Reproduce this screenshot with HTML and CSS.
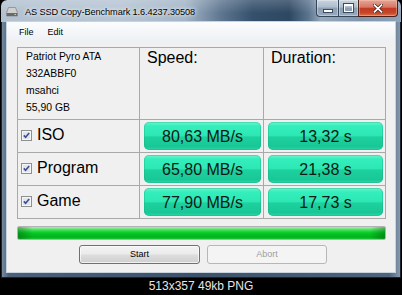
FILE: index.html
```html
<!DOCTYPE html>
<html>
<head>
<meta charset="utf-8">
<title>AS SSD Copy-Benchmark</title>
<link rel="stylesheet" href="styles.css">
</head>
<body>
<div class="window">
  <div class="titlebar">
    <svg class="appicon" width="12" height="11" viewBox="0 0 12 11">
      <path d="M2.5 1.5h7l2 5.5v3h-11v-3z" fill="#cfcfcf" stroke="#8a8a8a" stroke-width="0.8"/>
      <rect x="0.8" y="7" width="10.4" height="3" fill="#6a6a6a"/>
      <rect x="8.5" y="8" width="1.5" height="1" fill="#b8e0b8"/>
    </svg>
    <span class="title">AS SSD Copy-Benchmark 1.6.4237.30508</span>
    <div class="winbtns">
      <div class="wb wb-min"><span class="minbar"></span></div>
      <div class="wb wb-max"><span class="maxbox"></span></div>
      <div class="wb wb-close">
        <svg width="10" height="9" viewBox="0 0 10 9">
          <path d="M1.5 1.2 L8.5 7.8 M8.5 1.2 L1.5 7.8" stroke="#3a1a14" stroke-width="3.2" stroke-linecap="square"/>
          <path d="M1.5 1.2 L8.5 7.8 M8.5 1.2 L1.5 7.8" stroke="#ffffff" stroke-width="1.8" stroke-linecap="square"/>
        </svg>
      </div>
    </div>
  </div>
  <div class="client">
    <div class="menubar"><span>File</span><span>Edit</span></div>
    <div class="content">
      <div class="grid">
        <div class="cell info">
          <div>Patriot Pyro ATA</div>
          <div>332ABBF0</div>
          <div>msahci</div>
          <div>55,90 GB</div>
        </div>
        <div class="cell head">Speed:</div>
        <div class="cell head">Duration:</div>

        <div class="cell label">
          <svg class="chk" width="11" height="11" viewBox="0 0 11 11"><rect x="0.5" y="0.5" width="10" height="10" fill="#f6f6f6" stroke="#8e8f8f"/><rect x="2" y="2" width="7" height="7" fill="#e2e5ea"/><path d="M2.8 5.4 L4.6 7.3 L8.2 3.1" fill="none" stroke="#3b4f93" stroke-width="1.6"/></svg>
          <span>ISO</span>
        </div>
        <div class="cell val"><div class="pill">80,63 MB/s</div></div>
        <div class="cell val"><div class="pill">13,32 s</div></div>

        <div class="cell label">
          <svg class="chk" width="11" height="11" viewBox="0 0 11 11"><rect x="0.5" y="0.5" width="10" height="10" fill="#f6f6f6" stroke="#8e8f8f"/><rect x="2" y="2" width="7" height="7" fill="#e2e5ea"/><path d="M2.8 5.4 L4.6 7.3 L8.2 3.1" fill="none" stroke="#3b4f93" stroke-width="1.6"/></svg>
          <span>Program</span>
        </div>
        <div class="cell val"><div class="pill">65,80 MB/s</div></div>
        <div class="cell val"><div class="pill">21,38 s</div></div>

        <div class="cell label">
          <svg class="chk" width="11" height="11" viewBox="0 0 11 11"><rect x="0.5" y="0.5" width="10" height="10" fill="#f6f6f6" stroke="#8e8f8f"/><rect x="2" y="2" width="7" height="7" fill="#e2e5ea"/><path d="M2.8 5.4 L4.6 7.3 L8.2 3.1" fill="none" stroke="#3b4f93" stroke-width="1.6"/></svg>
          <span>Game</span>
        </div>
        <div class="cell val"><div class="pill">77,90 MB/s</div></div>
        <div class="cell val"><div class="pill">17,73 s</div></div>
      </div>
      <div class="progress"></div>
      <div class="buttons">
        <button class="btn btn-start">Start</button>
        <button class="btn btn-abort">Abort</button>
      </div>
    </div>
  </div>
</div>
<div class="caption">513x357 49kb PNG</div>
</body>
</html>
```
FILE: styles.css
```css
html, body {
  margin: 0;
  padding: 0;
  background: #000;
}
body {
  width: 402px;
  height: 295px;
  overflow: hidden;
  font-family: "Liberation Sans", Arial, sans-serif;
}
.window {
  margin-left: 1px;
  width: 400px;
  height: 278px;
  border-radius: 6px 6px 0 0;
  background: linear-gradient(to right, #7b90a6 0%, #4a607a 2%, #3c526b 50%, #4d647e 97%, #8a9db2 100%);
  box-shadow: inset 0 0 0 1px #1a2230;
  box-sizing: border-box;
  overflow: hidden;
}
.titlebar {
  height: 22px;
  display: flex;
  align-items: flex-start;
  padding: 0 3px 0 5px;
  box-sizing: border-box;
  background:
    linear-gradient(to bottom, rgba(255,255,255,0.18), rgba(255,255,255,0) 60%),
    linear-gradient(to right, #b3c2d1 0%, #b6c5d4 30%, #a3b5c7 46%, #5e7690 55%, #35506c 63%, #2e4762 72%, #5d7690 77%, #97a9bc 80%, #7f95ac 90%, #8ea3b9 100%);
  border-radius: 6px 6px 0 0;
}
.appicon {
  margin-top: 6px;
  flex: none;
}
.title {
  margin-left: 7px;
  margin-top: 6px;
  font-size: 9.2px;
  line-height: 12px;
  color: #000;
  letter-spacing: -0.1px;
  white-space: nowrap;
  text-shadow: 0 0 5px rgba(255,255,255,0.9), 0 0 3px rgba(255,255,255,0.8);
}
.winbtns {
  margin-left: auto;
  display: flex;
  height: 17px;
}
.wb {
  height: 17px;
  box-sizing: border-box;
  border: 1px solid #34465c;
  border-top: none;
  display: flex;
  align-items: center;
  justify-content: center;
}
.wb-min {
  width: 22px;
  border-radius: 0 0 0 4px;
  border-right: none;
  background: linear-gradient(to bottom, #c9d4df 0%, #aebccb 45%, #8c9eb2 50%, #98aabd 100%);
  box-shadow: inset 0 0 0 1px rgba(255,255,255,0.35);
}
.wb-max {
  width: 20px;
  border-right: none;
  background: linear-gradient(to bottom, #c9d4df 0%, #aebccb 45%, #8c9eb2 50%, #98aabd 100%);
  box-shadow: inset 0 0 0 1px rgba(255,255,255,0.35);
}
.wb-close {
  width: 40px;
  border-radius: 0 0 4px 0;
  border-color: #4a1f18;
  background: linear-gradient(to bottom, #e7a596 0%, #d87763 45%, #c03b22 52%, #c6452b 80%, #dc7446 100%);
  box-shadow: inset 0 0 0 1px rgba(255,220,200,0.35);
}
.minbar {
  display: block;
  width: 8px;
  height: 2px;
  margin-top: 6px;
  background: #fff;
  border: 1px solid #3b4a5e;
}
.maxbox {
  display: block;
  width: 7px;
  height: 5px;
  border: 1px solid #fff;
  border-top-width: 2px;
  outline: 1px solid #3b4a5e;
}
.client {
  margin: 0 6px;
  width: 388px;
  height: 250px;
  background: #f0f0f0;
  box-shadow: 0 0 0 1px #c9d3de;
}
.menubar {
  height: 20px;
  box-sizing: border-box;
  padding: 1px 0 0 12px;
  display: flex;
  gap: 14px;
  font-size: 9px;
  line-height: 19px;
  color: #000;
  background: linear-gradient(to bottom, #fbfcfd 0%, #f3f5f8 60%, #eceff4 100%);
}
.content {
  padding: 5px 9px 0 10px;
}
.grid {
  display: grid;
  grid-template-columns: 121px 123px 121px;
  grid-template-rows: 71px 32px 32px 32px;
  gap: 1px;
  width: 369px;
  box-sizing: border-box;
  border: 1px solid #a9a9a9;
  background: #a9a9a9;
}
.cell {
  background: #f0f0f0;
  box-sizing: border-box;
}
.info {
  padding: 0 0 0 8px;
  font-size: 10.4px;
  line-height: 17px;
  color: #000;
}
.head {
  padding: 0 0 0 7px;
  font-size: 16px;
  line-height: 20px;
  color: #000;
}
.label {
  display: flex;
  align-items: center;
  padding: 0 0 2px 3px;
  font-size: 16px;
  color: #000;
}
.chk {
  flex: none;
  margin-right: 5px;
  margin-top: 1px;
}
.val {
  padding: 2px 2px 2px 4px;
  display: flex;
}
.pill {
  flex: 1;
  display: flex;
  align-items: center;
  justify-content: center;
  padding-top: 1px;
  border-radius: 5px;
  font-size: 16px;
  color: #0a1a14;
  background: linear-gradient(to bottom, #6ef6d0 0%, #34eebb 14%, #2de8b4 48%, #1dd19f 54%, #19c796 88%, #2bd8a8 100%);
  box-shadow: inset 0 0 0 1px rgba(20,170,120,0.35);
}
.progress {
  margin-top: 7px;
  width: 369px;
  height: 14px;
  box-sizing: border-box;
  border: 1px solid #b3b3b3;
  border-radius: 2px;
  background:
    linear-gradient(to right, rgba(0,60,0,0.35) 0%, rgba(0,60,0,0) 4%, rgba(0,60,0,0) 96%, rgba(0,60,0,0.35) 100%),
    linear-gradient(to bottom, #a6f2ae 0%, #52e065 22%, #10d22e 42%, #05c424 55%, #03b21e 85%, #1ec838 100%);
}
.buttons {
  margin-top: 5px;
  padding-left: 62px;
  display: flex;
  gap: 7px;
}
.btn {
  margin: 0;
  padding: 0;
  height: 19px;
  box-sizing: border-box;
  border-radius: 3px;
  font-family: "Liberation Sans", Arial, sans-serif;
  font-size: 9px;
  line-height: 17px;
}
.btn-start {
  width: 121px;
  border: 1px solid #707070;
  color: #000;
  background: linear-gradient(to bottom, #f3f3f3 0%, #ebebeb 48%, #dddddd 52%, #cfcfcf 100%);
  box-shadow: inset 0 0 0 1px rgba(255,255,255,0.7);
}
.btn-abort {
  width: 120px;
  border: 1px solid #b4b8bb;
  color: #a0a0a0;
  background: #f4f4f4;
}
.caption {
  height: 17px;
  line-height: 17px;
  text-align: center;
  font-size: 12px;
  color: #e6e6e6;
}
```
